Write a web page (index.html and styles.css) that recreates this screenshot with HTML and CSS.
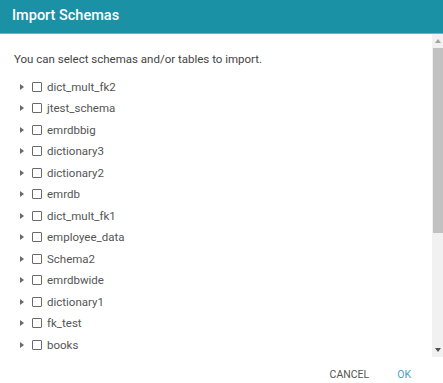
FILE: index.html
```html
<!DOCTYPE html>
<html lang="en">
<head>
    <meta charset="UTF-8">
    <meta name="viewport" content="width=device-width, initial-scale=1.0">
    <title>Import Schemas</title>
    <link rel="stylesheet" href="styles.css">
</head>
<body>

    <div class="dialog">
        <div class="dialog-header">Import Schemas</div>

        <div class="dialog-body">
            <div class="dialog-content">
                <p class="intro">You can select schemas and/or tables to import.</p>
                <ul class="tree">
                    <li><span class="toggle"></span><span class="check"></span><span class="label">dict_mult_fk2</span></li>
                    <li><span class="toggle"></span><span class="check"></span><span class="label">jtest_schema</span></li>
                    <li><span class="toggle"></span><span class="check"></span><span class="label">emrdbbig</span></li>
                    <li><span class="toggle"></span><span class="check"></span><span class="label">dictionary3</span></li>
                    <li><span class="toggle"></span><span class="check"></span><span class="label">dictionary2</span></li>
                    <li><span class="toggle"></span><span class="check"></span><span class="label">emrdb</span></li>
                    <li><span class="toggle"></span><span class="check"></span><span class="label">dict_mult_fk1</span></li>
                    <li><span class="toggle"></span><span class="check"></span><span class="label">employee_data</span></li>
                    <li><span class="toggle"></span><span class="check"></span><span class="label">Schema2</span></li>
                    <li><span class="toggle"></span><span class="check"></span><span class="label">emrdbwide</span></li>
                    <li><span class="toggle"></span><span class="check"></span><span class="label">dictionary1</span></li>
                    <li><span class="toggle"></span><span class="check"></span><span class="label">fk_test</span></li>
                    <li><span class="toggle"></span><span class="check"></span><span class="label">books</span></li>
                </ul>
            </div>

            <div class="scrollbar">
                <div class="scroll-btn"><span class="arrow-up"></span></div>
                <div class="scroll-track">
                    <div class="scroll-thumb"></div>
                </div>
                <div class="scroll-btn"><span class="arrow-down"></span></div>
            </div>
        </div>

        <div class="dialog-footer">
            <button class="btn btn-cancel">Cancel</button>
            <button class="btn btn-ok">OK</button>
        </div>
    </div>

</body>
</html>
```

FILE: styles.css
```css
body {
    margin: 0;
    padding: 0;
    font-family: Roboto, "Liberation Sans", Arial, sans-serif;
    background: #fff;
}
.dialog {
    width: 443px;
    height: 383px;
    display: flex;
    flex-direction: column;
    overflow: hidden;
}
.dialog-header {
    height: 33px;
    line-height: 32px;
    padding: 0 12px;
    background: #1a91a5;
    border-bottom: 1px solid #5cbdcb;
    color: #fff;
    font-size: 14.5px;
    font-weight: 500;
}
.dialog-body {
    height: 323px;
    display: flex;
    flex: none;
}
.dialog-content {
    flex: 1;
    overflow: hidden;
}
.intro {
    margin: 0;
    padding: 17px 14px 9px;
    font-size: 11.5px;
    line-height: 16px;
    color: #444;
}
.tree {
    list-style: none;
    margin: 0;
    padding: 0 0 0 20px;
}
.tree li {
    height: 21.5px;
    display: flex;
    align-items: center;
}
.toggle {
    width: 0;
    height: 0;
    border-top: 3.5px solid transparent;
    border-bottom: 3.5px solid transparent;
    border-left: 4px solid #6a6a6a;
    margin-right: 8px;
}
.check {
    width: 8px;
    height: 8px;
    border: 1px solid #6a6a6a;
    border-radius: 1px;
    margin-right: 5px;
}
.label {
    font-size: 11.5px;
    color: #555;
}
.scrollbar {
    width: 11px;
    display: flex;
    flex-direction: column;
    background: #f1f1f1;
}
.scroll-btn {
    height: 14px;
    display: flex;
    align-items: center;
    justify-content: center;
}
.arrow-up {
    width: 0;
    height: 0;
    border-left: 3.5px solid transparent;
    border-right: 3.5px solid transparent;
    border-bottom: 4px solid #a3a3a3;
}
.arrow-down {
    width: 0;
    height: 0;
    border-left: 3.5px solid transparent;
    border-right: 3.5px solid transparent;
    border-top: 4px solid #505050;
}
.scroll-track {
    flex: 1;
}
.scroll-thumb {
    height: 185px;
    margin-left: 1px;
    background: #c1c1c1;
}
.dialog-footer {
    flex: 1;
    display: flex;
    justify-content: flex-end;
    align-items: flex-start;
    padding: 11px 24px 0 0;
    gap: 12px;
}
.btn {
    background: none;
    border: none;
    font-family: inherit;
    font-size: 10.5px;
    line-height: 14px;
    text-transform: uppercase;
    padding: 0 8px;
    cursor: pointer;
}
.btn-cancel {
    color: #555;
}
.btn-ok {
    color: #3fa3bd;
}
```
